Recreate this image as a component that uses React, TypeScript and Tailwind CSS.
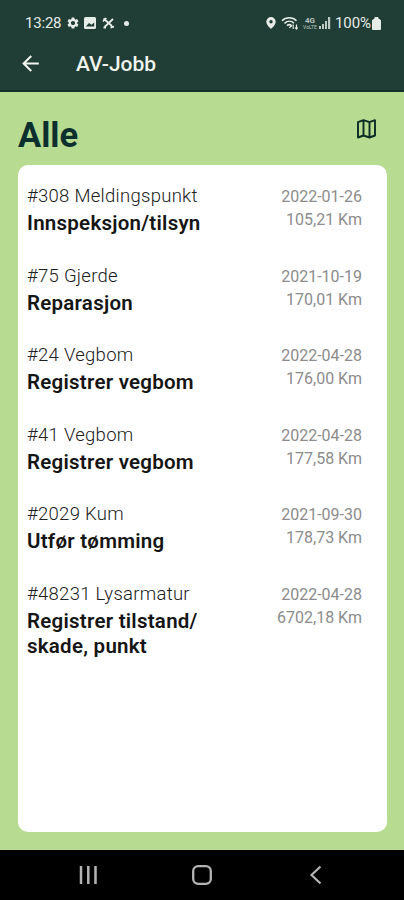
import React from "react";
import { MdSettings, MdArrowBack } from "react-icons/md";

type Job = { id: string; title: string[]; date: string; distance: string };

const jobs: Job[] = [
  { id: "#308 Meldingspunkt", title: ["Innspeksjon/tilsyn"], date: "2022-01-26", distance: "105,21 Km" },
  { id: "#75 Gjerde", title: ["Reparasjon"], date: "2021-10-19", distance: "170,01 Km" },
  { id: "#24 Vegbom", title: ["Registrer vegbom"], date: "2022-04-28", distance: "176,00 Km" },
  { id: "#41 Vegbom", title: ["Registrer vegbom"], date: "2022-04-28", distance: "177,58 Km" },
  { id: "#2029 Kum", title: ["Utfør tømming"], date: "2021-09-30", distance: "178,73 Km" },
  { id: "#48231 Lysarmatur", title: ["Registrer tilstand/", "skade, punkt"], date: "2022-04-28", distance: "6702,18 Km" },
];

function StatusBar() {
  return (
    <div className="flex h-[46px] items-center pl-[25px] pr-[23px] text-[#e6ece8]">
      <span className="w-[41px] whitespace-nowrap text-[15px] tracking-[-0.2px]">13:28</span>
      <MdSettings className="h-[14px] w-[14px]" />
      <svg className="ml-[4px] h-[12px] w-[12px]" viewBox="0 0 12 12" fill="currentColor">
        <path fillRule="evenodd" d="M1.500 0h9A1.500 1.500 0 0 1 12 1.500v9a1.500 1.500 0 0 1-1.500 1.500h-9A1.500 1.500 0 0 1 0 10.500v-9A1.500 1.500 0 0 1 1.500 0zM1.800 9.500h8.400V5.500L7.500 7.800 5 6z" />
      </svg>
      <svg className="ml-[6px] h-[12px] w-[13px]" viewBox="0 0 12 12" fill="none" stroke="currentColor" strokeWidth="1.8">
        <path d="M1 1.5 9.500 9M10.500 2 2 10M.5 4.500 3.800 1M8 10.500l3.500-.8" />
        <path d="M1 10.500h2.500" strokeWidth="2" />
      </svg>
      <span className="ml-[9px] h-[5px] w-[5px] rounded-full bg-current" />
      <div className="ml-auto flex items-center">
        <svg className="h-[12px] w-[10px]" viewBox="0 0 10 12" fill="currentColor">
          <path fillRule="evenodd" d="M5 0a4.700 4.700 0 0 1 4.700 4.700C9.700 8 5 12 5 12S.3 8 .3 4.700A4.700 4.700 0 0 1 5 0zm0 3a1.700 1.700 0 1 0 0 3.400A1.700 1.700 0 0 0 5 3z" />
        </svg>
        <svg className="ml-[5px] h-[14px] w-[18px]" viewBox="0 0 18 14" fill="none" stroke="currentColor" strokeWidth="1.6">
          <path d="M1 4.800C5 .8 11.500.8 15.500 4.800M3.500 7.300c3-2.800 6.800-2.800 9.500 0M6 9.600c1.500-1.300 3-1.300 4.500 0" />
          <path d="M8.300 11.800 11 9.500M12.200 13V8.500M15.500 8.500V13m-1.300-1.500 1.300 1.500 1.200-1.500" strokeWidth="1.200" />
        </svg>
        <div className="ml-[3px] flex w-[16px] flex-col items-center leading-none opacity-75">
          <span className="text-[8px] font-bold leading-[7px]">4G</span>
          <span className="text-[5px] leading-[6px]">VoLTE</span>
        </div>
        <svg className="ml-[1px] h-[12px] w-[12px]" viewBox="0 0 12 12" fill="currentColor">
          <path d="M0 9h2v3H0zM3 7h2v5H3zM6 4h2v8H6zM9 0h2.200v12H9z" opacity=".8" />
        </svg>
        <span className="ml-[4px] w-[37px] whitespace-nowrap text-[15px] leading-[20px] tracking-[-0.100px]">100%</span>
        <svg className="h-[13px] w-[9px]" viewBox="0 0 9 13" fill="currentColor">
          <path d="M2.700 0h3.600v1.200L9 3.200V12a1 1 0 0 1-1 1H1a1 1 0 0 1-1-1V3.200l2.700-2z" />
        </svg>
      </div>
    </div>
  );
}

function JobRow({ job }: { job: Job }) {
  return (
    <li className="flex h-[79.500px] justify-between">
      <div>
        <div className="whitespace-nowrap text-[18.500px] font-light leading-[26px] tracking-[0.280px] text-[#202020]">{job.id}</div>
        <div className="mt-[2px] whitespace-nowrap text-[20.500px] font-semibold leading-[25px] tracking-[0.250px] text-[#151515]">
          {job.title.map((line) => (
            <div key={line}>{line}</div>
          ))}
        </div>
      </div>
      <div className="whitespace-nowrap pt-[2px] text-right text-[16px] leading-[23px] text-[#8c8c8c]">
        <div>{job.date}</div>
        <div>{job.distance}</div>
      </div>
    </li>
  );
}

export default function App() {
  return (
    <div className="flex h-[900px] w-[404px] flex-col overflow-hidden bg-[#b7dc91] font-['Roboto',sans-serif]">
      <header className="h-[92px] shrink-0 border-b-2 border-[#153029] bg-[#203e35]">
        <StatusBar />
        <div className="flex h-[36px] items-center pl-[18px] text-[#f0f4ee]">
          <MdArrowBack className="-mt-[2px] h-[25px] w-[25px]" stroke="none" />
          <h1 className="ml-[33px] text-[21px] font-medium leading-[26px]">AV-Jobb</h1>
        </div>
      </header>
      <main className="flex grow flex-col px-[18px] pb-[18px]">
        <div className="flex h-[73px] items-center justify-between pr-[10px]">
          <h2 className="pt-[13px] text-[34.500px] font-bold leading-[42px] text-[#0d302e]">Alle</h2>
          <svg className="h-[20px] w-[20px]" viewBox="0 0 20 20" fill="none" stroke="#0b2b25" strokeWidth="1.900" strokeLinejoin="round">
            <path d="M2 3.200 7.500 1.200l6 2 5.500-2v15.300l-5.500 2-6-2-5.500 2zM7.500 1.200v15.300M13.500 3.200v15.300" />
          </svg>
        </div>
        <ul className="w-[369px] grow rounded-[10px] bg-white pl-[9px] pr-[25px] pt-[18px]">
          {jobs.map((job) => (
            <JobRow key={job.id} job={job} />
          ))}
        </ul>
      </main>
      <nav className="flex h-[50px] shrink-0 items-center bg-black text-[#b4b4b4]">
        <svg className="ml-[78px] h-[20px] w-[20px]" viewBox="0 0 20 20" fill="none" stroke="currentColor" strokeWidth="2.500">
          <path d="M3 1v18M10.300 1v18M17.500 1v18" />
        </svg>
        <svg className="ml-[93px] h-[22px] w-[22px]" viewBox="0 0 22 22" fill="none" stroke="currentColor" strokeWidth="2.300">
          <rect x="2.200" y="2.200" width="17.600" height="17.600" rx="5" />
        </svg>
        <svg className="ml-[96px] h-[20px] w-[14px]" viewBox="0 0 14 20" fill="none" stroke="currentColor" strokeWidth="2.200">
          <path d="M11.500 1.500 2.500 10l9 8.500" />
        </svg>
      </nav>
    </div>
  );
}
